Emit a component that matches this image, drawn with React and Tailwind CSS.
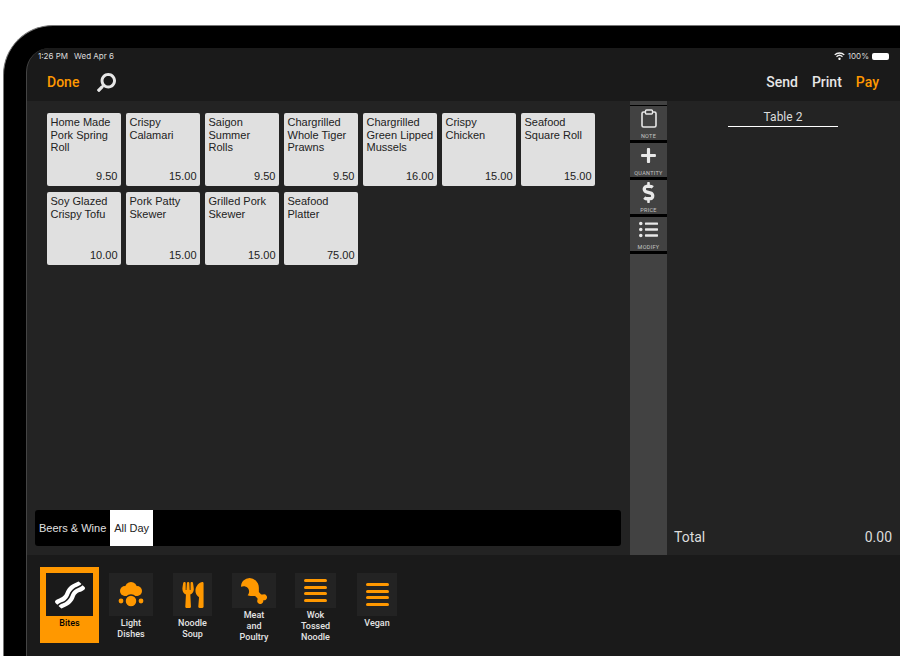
import { FaBacon, FaDollarSign, FaDrumstickBite, FaListUl, FaPlus, FaSearch, FaUtensils } from "react-icons/fa"

const items = [
  { name: "Home Made Pork Spring Roll", price: "9.50" },
  { name: "Crispy Calamari", price: "15.00" },
  { name: "Saigon Summer Rolls", price: "9.50" },
  { name: "Chargrilled Whole Tiger Prawns", price: "9.50" },
  { name: "Chargrilled Green Lipped Mussels", price: "16.00" },
  { name: "Crispy Chicken", price: "15.00" },
  { name: "Seafood Square Roll", price: "15.00" },
  { name: "Soy Glazed Crispy Tofu", price: "10.00" },
  { name: "Pork Patty Skewer", price: "15.00" },
  { name: "Grilled Pork Skewer", price: "15.00" },
  { name: "Seafood Platter", price: "75.00" },
]

function ClipboardIcon() {
  return (
    <svg width="16" height="19" viewBox="0 0 16 19" fill="none" stroke="currentColor">
      <rect x="1" y="3" width="14" height="15" rx="1.5" strokeWidth="1.6" />
      <rect x="4.5" y="1" width="7" height="4" rx="1" fill="#424242" strokeWidth="1.4" />
    </svg>
  )
}

function CloudIcon() {
  return (
    <svg width="28" height="28" viewBox="0 0 28 28" fill="#ff9800">
      <circle cx="8" cy="10" r="5" />
      <circle cx="14" cy="7" r="6" />
      <circle cx="20" cy="10" r="5" />
      <rect x="6" y="9" width="16" height="6" rx="3" />
      <circle cx="14" cy="20" r="6" stroke="#232323" strokeWidth="1.5" />
      <circle cx="4" cy="20" r="2.4" />
      <circle cx="24" cy="20" r="2.4" />
    </svg>
  )
}

function BarsIcon() {
  return (
    <div className="flex w-[23px] flex-col gap-[3.5px]">
      <div className="h-[3px] rounded-full bg-[#ff9800]" />
      <div className="h-[3px] rounded-full bg-[#ff9800]" />
      <div className="h-[3px] rounded-full bg-[#ff9800]" />
      <div className="h-[3px] rounded-full bg-[#ff9800]" />
    </div>
  )
}

function SideButton({ label, children }) {
  return (
    <div className="flex h-[34px] flex-col items-center justify-between border-b-[3px] border-black bg-[#424242] box-content text-[#e8e8e8]">
      <div className="flex h-[24px] items-center justify-center">{children}</div>
      <div className="text-[5.5px] leading-[8px] tracking-[0.3px] text-[#c4c4c4]">{label}</div>
    </div>
  )
}

function Category({ label, active, width, children }) {
  return (
    <div className={`flex h-[76px] flex-col items-center overflow-hidden pt-[6px] ${width} ${active ? "bg-[#ff9800] text-black" : "text-[#e4e4e4]"}`}>
      <div className={`flex h-[43px] items-center justify-center self-stretch ${active ? "mx-[6px] bg-[#1a1a1a]" : "bg-[#232323]"}`}>
        {children}
      </div>
      <div className="mt-[1px] px-[4px] pt-[1px] text-center text-[9px] font-medium leading-[11px]">{label}</div>
    </div>
  )
}

export default function App() {
  return (
    <div className="h-[656px] w-[900px] overflow-hidden bg-white pl-[3px] pt-[25px] font-['Roboto',sans-serif]">
      <div className="h-[640px] rounded-tl-[50px] border-l border-t border-[#777] bg-black pl-[22px] pt-[22px]">
        <div className="flex h-[620px] flex-col overflow-hidden rounded-tl-[24px] border-l border-[#444] bg-[#1a1a1a]">
          {/* Status bar */}
          <div className="flex h-[16px] items-center justify-between pl-[11px] pr-[11px] pt-[0px] text-[8.5px] text-[#dcdcdc]">
            <div className="flex gap-[6px] font-['Inter',sans-serif] text-[8px]">
              <span>1:26 PM</span>
              <span>Wed Apr 6</span>
            </div>
            <div className="flex items-center gap-[3px] font-['Inter',sans-serif] text-[8px]">
              <svg width="11" height="8" viewBox="0 0 11 8" fill="none" stroke="#f0f0f0" strokeWidth="1.3">
                <path d="M.7 2.9a7 7 0 0 1 9.6 0" />
                <path d="M2.5 4.7a4.4 4.4 0 0 1 6 0" />
                <circle cx="5.5" cy="6.8" r=".6" fill="#f0f0f0" />
              </svg>
              <span>100%</span>
              <div className="h-[7px] w-[17px] rounded-[2px] bg-white" />
            </div>
          </div>

          {/* Nav */}
          <div className="flex h-[37px] items-center justify-between pl-[20px] pr-[21px] text-[14px] font-medium">
            <div className="flex items-center gap-[18px]">
              <span className="text-[#ff9800]">Done</span>
              <FaSearch className="h-[19px] w-[19px] -scale-x-100 text-[#e6e6e6]" />
            </div>
            <div className="flex gap-[14px] text-[#e6e6e6]">
              <span>Send</span>
              <span>Print</span>
              <span className="text-[#ff9800]">Pay</span>
            </div>
          </div>

          {/* Main */}
          <div className="flex h-[454px] bg-[#232323]">
            <div className="flex w-[603px] flex-col pl-[8px]">
              <div className="grid h-[409px] grid-cols-[repeat(7,74px)] content-start gap-x-[5px] gap-y-[6px] pl-[12px] pt-[12px]">
                {items.map((item) => (
                  <div key={item.name} className="flex h-[73px] flex-col justify-between rounded-[2px] bg-[#e0e0e0] px-[3.5px] pb-[3px] pt-[3px] font-['Liberation_Sans',sans-serif] text-[11px] leading-[12.6px] text-[#222]">
                    <div>{item.name}</div>
                    <div className="text-right">{item.price}</div>
                  </div>
                ))}
              </div>
              <div className="flex h-[36px] w-[586px] rounded-[3px] bg-black pl-[4px] font-['Liberation_Sans',sans-serif] text-[11px]">
                <div className="flex items-center pr-[4px] text-[#e0e0e0]">Beers &amp; Wine</div>
                <div className="flex items-center bg-white px-[4px] text-[#222]">All Day</div>
              </div>
            </div>

            <div className="w-[37px] bg-[#424242] pt-[4px]">
              <div className="border-t border-black" />
              <SideButton label="NOTE"><ClipboardIcon /></SideButton>
              <SideButton label="QUANTITY"><FaPlus className="h-[17px] w-[17px]" /></SideButton>
              <SideButton label="PRICE"><FaDollarSign className="h-[21px] w-[21px]" /></SideButton>
              <SideButton label="MODIFY"><FaListUl className="h-[19px] w-[19px]" /></SideButton>
            </div>

            <div className="flex flex-1 flex-col justify-between pb-[9px]">
              <div className="flex justify-center pl-[-1px] pt-[9px]">
                <div className="mr-[1px] w-[110px] border-b border-white pb-[2px] text-center text-[12px] leading-[14px] text-[#dcdcdc]">Table 2</div>
              </div>
              <div className="flex justify-between pl-[7px] pr-[8px] text-[14px] leading-[18px] text-[#dcdcdc]">
                <span>Total</span>
                <span>0.00</span>
              </div>
            </div>
          </div>

          {/* Categories */}
          <div className="relative flex-1 pl-[13px] pt-[12px]">
            <div className="flex items-start">
              <Category label="Bites" active width="w-[59px]">
                <FaBacon className="h-[30px] w-[30px] text-white" />
              </Category>
              <div className="ml-[10px]"><Category label="Light Dishes" width="w-[44px]"><CloudIcon /></Category></div>
              <div className="ml-[20px]"><Category label="Noodle Soup" width="w-[39px]"><FaUtensils className="h-[26px] w-[26px] text-[#ff9800]" /></Category></div>
              <div className="ml-[20px]"><Category label="Meat and Poultry" width="w-[44px]"><FaDrumstickBite className="h-[26px] w-[26px] -scale-x-100 text-[#ff9800]" /></Category></div>
              <div className="ml-[19px]"><Category label="Wok Tossed Noodle" width="w-[41px]"><BarsIcon /></Category></div>
              <div className="ml-[21px]"><Category label="Vegan" width="w-[40px]"><BarsIcon /></Category></div>
            </div>
            <div className="absolute bottom-[4px] left-[321px] h-[4px] w-[231px] rounded-full bg-[#555]" />
          </div>
        </div>
      </div>
    </div>
  )
}
